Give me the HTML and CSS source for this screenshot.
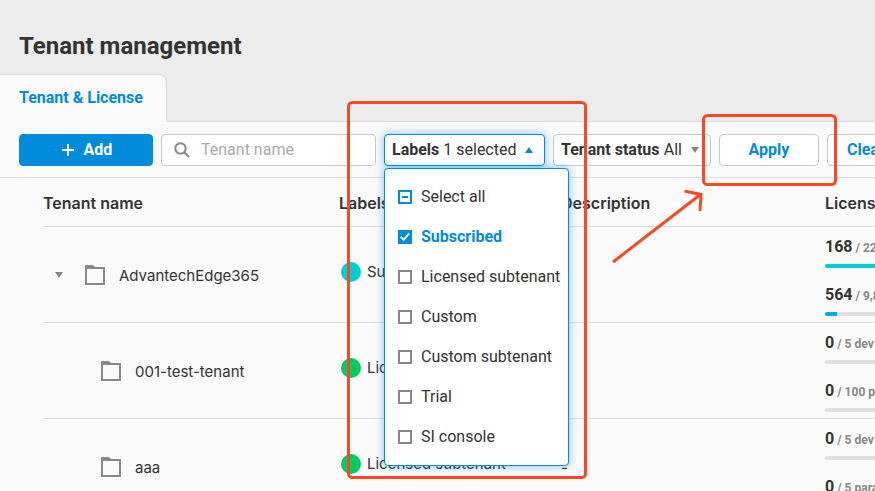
FILE: index.html
```html
<!DOCTYPE html>
<html lang="en">
<head>
<meta charset="utf-8">
<title>Tenant management</title>
<link rel="stylesheet" href="styles.css">
</head>
<body>
<svg class="defs" aria-hidden="true">
  <symbol id="folder" viewBox="0 0 20 20"><path d="M0 0h8l2 2h10v18H0zM2 4v14h16V4z" fill="#888" fill-rule="evenodd"/></symbol>
  <symbol id="down" viewBox="0 0 8 6"><path d="M0 0h8L4 6z" fill="#888"/></symbol>
</svg>
<header class="page-head">
  <h1>Tenant management</h1>
  <nav class="tabs"><a class="tab" href="#tenants">Tenant &amp; License</a></nav>
</header>
<main id="tenants">
  <form class="toolbar">
    <button type="button" class="btn primary">
      <svg width="12" height="12" viewBox="0 0 12 12"><path d="M6 0v12M0 6h12" stroke="#fff" stroke-width="2"/></svg>Add
    </button>
    <label class="search">
      <svg width="16" height="16" viewBox="0 0 16 16" fill="none" stroke="#888" stroke-width="2"><circle cx="6.500" cy="6.500" r="5.200"/><path d="M10.200 10.200L15 15"/></svg>
      <input type="text" placeholder="Tenant name" aria-label="Tenant name">
    </label>
    <div class="dropdown">
      <button type="button" class="picker open" aria-expanded="true"><span><b>Labels</b> 1 selected</span>
        <svg width="8" height="6" viewBox="0 0 8 6"><path d="M0 6h8L4 0z" fill="#008cdb"/></svg>
      </button>
      <div class="menu">
        <label class="option"><input type="checkbox" class="partial">Select all</label>
        <label class="option selected"><input type="checkbox" checked>Subscribed</label>
        <label class="option"><input type="checkbox">Licensed subtenant</label>
        <label class="option"><input type="checkbox">Custom</label>
        <label class="option"><input type="checkbox">Custom subtenant</label>
        <label class="option"><input type="checkbox">Trial</label>
        <label class="option"><input type="checkbox">SI console</label>
      </div>
    </div>
    <div class="picker status">
      <label for="status">Tenant status</label>
      <select id="status"><option>All</option></select>
      <svg width="8" height="6"><use href="#down"/></svg>
    </div>
    <button type="button" class="btn">Apply</button>
    <button type="button" class="btn">Clear</button>
  </form>
  <div class="listing">
    <table>
      <colgroup><col class="c-name"><col class="c-label"><col class="c-desc"><col class="c-license"></colgroup>
      <thead><tr><th>Tenant name</th><th>Labels</th><th>Description</th><th>License</th></tr></thead>
      <tbody>
        <tr>
          <td><div class="name"><svg class="toggle" width="8" height="6"><use href="#down"/></svg><svg width="20" height="20"><use href="#folder"/></svg><span>AdvantechEdge365</span></div></td>
          <td><div class="tag"><i class="dot teal"></i>Subscribed</div></td>
          <td></td>
          <td>
            <div class="quota"><p><b>168</b> / 22</p><div class="bar"><div class="fill teal" style="width:100%"></div></div></div>
            <div class="quota"><p><b>564</b> / 9,8</p><div class="bar"><div class="fill" style="width:6%"></div></div></div>
          </td>
        </tr>
        <tr>
          <td><div class="name child"><svg width="20" height="20"><use href="#folder"/></svg><span>001-test-tenant</span></div></td>
          <td><div class="tag"><i class="dot"></i>Licensed subtenant</div></td>
          <td></td>
          <td>
            <div class="quota"><p><b>0</b> / 5 dev</p><div class="bar"></div></div>
            <div class="quota"><p><b>0</b> / 100 p</p><div class="bar"></div></div>
          </td>
        </tr>
        <tr>
          <td><div class="name child"><svg width="20" height="20"><use href="#folder"/></svg><span>aaa</span></div></td>
          <td><div class="tag"><i class="dot"></i>Licensed subtenant</div></td>
          <td>-</td>
          <td>
            <div class="quota"><p><b>0</b> / 5 dev</p><div class="bar"></div></div>
            <div class="quota"><p><b>0</b> / 5 para</p><div class="bar"></div></div>
          </td>
        </tr>
      </tbody>
    </table>
  </div>
</main>
<svg class="notes" width="875" height="491" fill="none" stroke="#f94826" stroke-width="3" aria-hidden="true">
  <rect x="348.500" y="102.500" width="237" height="375" rx="4"/>
  <rect x="703.500" y="115.500" width="132" height="69" rx="4"/>
  <path d="M613 262L701 194M684.500 191L701 194.500L700 211"/>
</svg>
</body>
</html>
```
FILE: styles.css
```css
* { box-sizing: border-box; }
html { height: 100%; overflow: hidden; }
body {
  margin: 0;
  height: 100%;
  overflow: hidden;
  position: relative;
  background: #fafafa;
  color: #333;
  font: 16px/24px Roboto, sans-serif;
}
b { font-weight: 700; }
button, input, select { font: inherit; color: inherit; }
svg { flex: none; display: block; }
.defs { display: none; }

.page-head {
  background: #ececec;
  border-bottom: 1px solid #dcdcdc;
  padding-top: 30px;
}
h1 { margin: 0 0 12px; padding-left: 19px; font-size: 24px; line-height: 32px; font-weight: 700; }
.tabs { display: flex; margin-bottom: -1px; }
.tab {
  height: 48px;
  padding: 0 23px 0 19px;
  line-height: 46px;
  background: #fafafa;
  border: 1px solid #dcdcdc;
  border-width: 1px 1px 0 0;
  border-top-right-radius: 8px;
  color: #008cdb;
  font-weight: 700;
  text-decoration: none;
}

.toolbar {
  display: flex;
  gap: 8px;
  padding: 12px 19px 11px;
  border-bottom: 1px solid #dcdcdc;
}
.toolbar > * { flex: none; }
.btn, .picker, .search {
  display: flex;
  align-items: center;
  height: 32px;
  background: #fff;
  border: 1px solid #c8c8c8;
  border-radius: 4px;
}
.btn {
  justify-content: center;
  width: 100px;
  color: #008cdb;
  font-weight: 700;
}
.btn:last-child { justify-content: flex-start; padding-left: 19px; }
.btn.primary {
  gap: 10px;
  width: 134px;
  padding: 0 5px 0 7px;
  background: #008cdb;
  border-color: #008cdb;
  color: #fff;
}
.search { width: 215px; padding: 0 12px; gap: 10px; }
.search input { flex: 1; min-width: 0; border: 0; padding: 0 0 0 1px; background: none; outline: 0; }
.search input::placeholder { color: #aaa; }
.picker { justify-content: space-between; padding: 0 11px 0 7px; }
.picker.open {
  width: 161px;
  border-color: #008cdb;
  box-shadow: 0 0 8px rgba(0, 140, 219, 0.5);
}
.status { width: 158px; }
.status label { font-weight: 700; }
.status select { appearance: none; border: 0; padding: 0; margin-right: 4px; background: none; }

.dropdown { position: relative; }
.menu {
  position: absolute;
  z-index: 2;
  top: 34px;
  left: 0;
  width: 185px;
  padding: 8px 0;
  background: #fff;
  border: 1px solid #008cdb;
  border-radius: 4px;
  box-shadow: 0 0 8px rgba(0, 140, 219, 0.5);
}
.option {
  display: flex;
  align-items: center;
  gap: 9px;
  height: 40px;
  padding-left: 13px;
  white-space: nowrap;
}
.option.selected { color: #008cdb; font-weight: 700; }
.option input {
  appearance: none;
  display: grid;
  place-items: center;
  width: 14px;
  height: 14px;
  margin: 0;
  border: 2px solid #888;
}
.option input.partial { border-color: #008cdb; }
.option input.partial::before { content: ""; width: 6px; height: 2px; background: #008cdb; }
.option input:checked { border-color: #008cdb; background: #008cdb; }
.option input:checked::before {
  content: "";
  width: 10px;
  height: 10px;
  background: #fff;
  clip-path: polygon(0 55%, 15% 42%, 37% 64%, 84% 8%, 98% 20%, 38% 92%);
}

.listing { padding-left: 43px; }
table { table-layout: fixed; width: 982px; border-spacing: 0; }
.c-name { width: 296px; }
.c-label { width: 222px; }
.c-desc { width: 264px; }
.c-license { width: 200px; }
th, td { padding: 0; text-align: left; border-bottom: 1px solid #dcdfe4; white-space: nowrap; }
th { height: 49px; padding-top: 2px; font: 600 16px/24px Inter, Roboto, sans-serif; }
td { height: 96px; font: 15px/24px Inter, Roboto, sans-serif; }
td:nth-child(3) { padding-top: 2px; }
.name { display: flex; align-items: center; gap: 14px; padding-left: 12px; }
.name span { padding-top: 2px; }
.name .toggle { margin-right: 8px; }
.name.child { padding-left: 58px; }
.tag { display: flex; align-items: center; gap: 6px; padding: 0 0 6px 2px; }
.dot { width: 20px; height: 20px; border-radius: 50%; background: #00cc66; }
.dot.teal, .fill.teal { background: #00ced1; }
.quota { height: 48px; padding-top: 8px; font-family: Roboto, sans-serif; }
.quota:last-child { height: 47px; }
.quota p { margin: 0 0 4px; font-size: 12px; font-weight: 700; color: #888; }
.quota b { font-size: 16px; color: #333; }
.bar { height: 4px; border-radius: 2px; background: #e0e0e0; overflow: hidden; }
.fill { height: 4px; background: #00a8e8; }

.notes { position: absolute; z-index: 3; top: 0; left: 0; pointer-events: none; }
```
